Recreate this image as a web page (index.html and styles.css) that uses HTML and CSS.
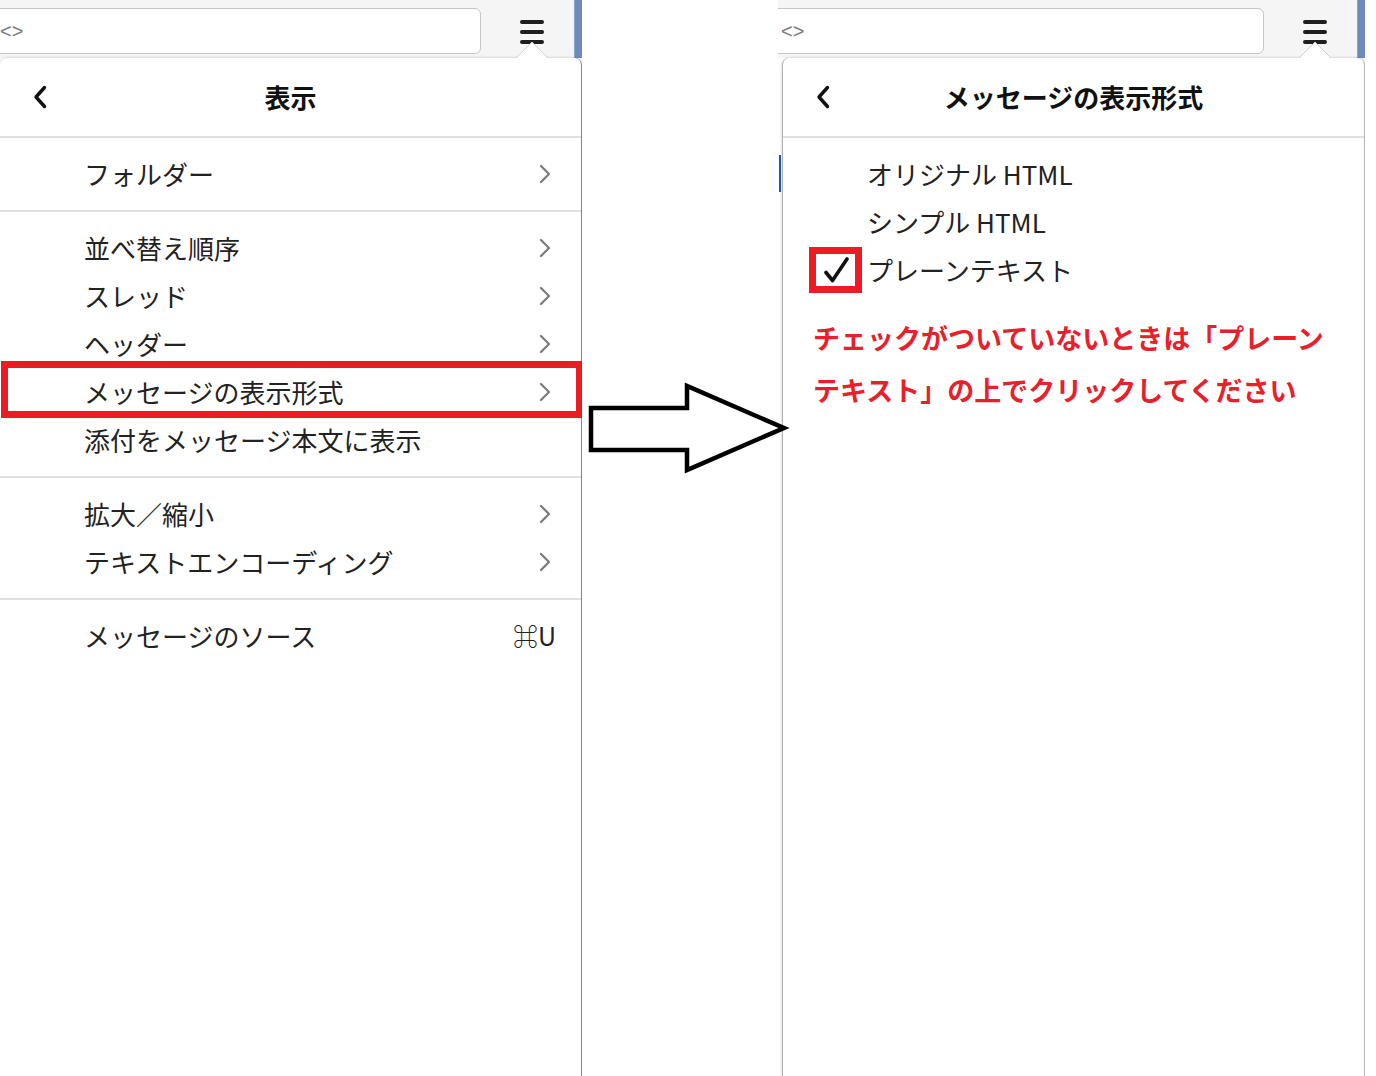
FILE: index.html
```html
<!DOCTYPE html>
<html lang="ja">
<head>
<meta charset="utf-8">
<title>表示 – メッセージの表示形式</title>
<link rel="stylesheet" href="styles.css">
</head>
<body>
<div class="page">
  <section class="shot shot-left">
    <div class="toolbar">
      <div class="search"><span class="search-hint">&lt;&gt;</span></div>
      <div class="menu-btn">
        <svg width="24" height="24" viewBox="0 0 24 24"><path d="M2 2H22M2 12H22M2 22H22" stroke="#1e1e1e" stroke-width="4" stroke-linecap="round" fill="none"/></svg>
      </div>
      <div class="edge"></div>
    </div>
    <div class="stage">
      <div class="panel">
        <span class="notch"><svg width="34" height="19" viewBox="0 0 34 19"><path d="M0 18.5L17 1L34 18.5Z" fill="#fff"/><path d="M0 18L17 1L34 18" fill="none" stroke="#cfcfcf" stroke-width="1"/><rect x="0" y="17" width="34" height="2" fill="#fff"/></svg></span>
        <header class="panel-head">
          <span class="back"><svg width="14" height="24" viewBox="0 0 14 24"><path d="M11.5 2.5L3 12L11.5 21.5" fill="none" stroke="#111" stroke-width="3.4" stroke-linecap="round" stroke-linejoin="round"/></svg></span>
          <h1 class="title">表示</h1>
          <span></span>
        </header>
        <div class="sep"></div>
        <ul class="group">
          <li class="item"><span>フォルダー</span><svg class="chev" width="12" height="20" viewBox="0 0 12 20"><path d="M2 2L10 10L2 18" fill="none" stroke="#7a7a7a" stroke-width="2.2" stroke-linecap="round" stroke-linejoin="round"/></svg></li>
        </ul>
        <div class="sep"></div>
        <ul class="group">
          <li class="item"><span>並べ替え順序</span><svg class="chev" width="12" height="20" viewBox="0 0 12 20"><path d="M2 2L10 10L2 18" fill="none" stroke="#7a7a7a" stroke-width="2.2" stroke-linecap="round" stroke-linejoin="round"/></svg></li>
          <li class="item"><span>スレッド</span><svg class="chev" width="12" height="20" viewBox="0 0 12 20"><path d="M2 2L10 10L2 18" fill="none" stroke="#7a7a7a" stroke-width="2.2" stroke-linecap="round" stroke-linejoin="round"/></svg></li>
          <li class="item"><span>ヘッダー</span><svg class="chev" width="12" height="20" viewBox="0 0 12 20"><path d="M2 2L10 10L2 18" fill="none" stroke="#7a7a7a" stroke-width="2.2" stroke-linecap="round" stroke-linejoin="round"/></svg></li>
          <li class="item"><span>メッセージの表示形式</span><svg class="chev" width="12" height="20" viewBox="0 0 12 20"><path d="M2 2L10 10L2 18" fill="none" stroke="#7a7a7a" stroke-width="2.2" stroke-linecap="round" stroke-linejoin="round"/></svg><span class="hl"></span></li>
          <li class="item"><span>添付をメッセージ本文に表示</span></li>
        </ul>
        <div class="sep"></div>
        <ul class="group">
          <li class="item"><span>拡大／縮小</span><svg class="chev" width="12" height="20" viewBox="0 0 12 20"><path d="M2 2L10 10L2 18" fill="none" stroke="#7a7a7a" stroke-width="2.2" stroke-linecap="round" stroke-linejoin="round"/></svg></li>
          <li class="item"><span>テキストエンコーディング</span><svg class="chev" width="12" height="20" viewBox="0 0 12 20"><path d="M2 2L10 10L2 18" fill="none" stroke="#7a7a7a" stroke-width="2.2" stroke-linecap="round" stroke-linejoin="round"/></svg></li>
        </ul>
        <div class="sep"></div>
        <ul class="group">
          <li class="item"><span>メッセージのソース</span><span class="shortcut">⌘U</span></li>
        </ul>
      </div>
    </div>
  </section>

  <div class="gutter"></div>

  <section class="shot shot-right">
    <div class="toolbar">
      <div class="search search-right"><span class="search-hint">&lt;&gt;</span></div>
      <div class="menu-btn">
        <svg width="24" height="24" viewBox="0 0 24 24"><path d="M2 2H22M2 12H22M2 22H22" stroke="#1e1e1e" stroke-width="4" stroke-linecap="round" fill="none"/></svg>
      </div>
      <div class="edge"></div>
    </div>
    <div class="stage">
      <div class="peek"><span class="peek-mark"></span></div>
      <div class="panel panel-right">
        <span class="notch"><svg width="34" height="19" viewBox="0 0 34 19"><path d="M0 18.5L17 1L34 18.5Z" fill="#fff"/><path d="M0 18L17 1L34 18" fill="none" stroke="#cfcfcf" stroke-width="1"/><rect x="0" y="17" width="34" height="2" fill="#fff"/></svg></span>
        <header class="panel-head">
          <span class="back"><svg width="14" height="24" viewBox="0 0 14 24"><path d="M11.5 2.5L3 12L11.5 21.5" fill="none" stroke="#111" stroke-width="3.4" stroke-linecap="round" stroke-linejoin="round"/></svg></span>
          <h1 class="title">メッセージの表示形式</h1>
          <span></span>
        </header>
        <div class="sep"></div>
        <ul class="group options">
          <li class="item"><span>オリジナル HTML</span></li>
          <li class="item"><span>シンプル HTML</span></li>
          <li class="item"><span class="check-box"><svg width="26" height="26" viewBox="0 0 26 26"><path d="M3 15.5L9.5 23.5L24 2" fill="none" stroke="#111" stroke-width="3.6" stroke-linecap="round" stroke-linejoin="round"/></svg></span><span>プレーンテキスト</span></li>
        </ul>
        <p class="note">チェックがついていないときは「プレーン<br>テキスト」の上でクリックしてください</p>
      </div>
    </div>
  </section>

  <svg class="arrow" width="206" height="96" viewBox="585 380 206 96">
    <path d="M591 408H687V386L784 428L687 470V450H591Z" fill="#fff" stroke="#000" stroke-width="4.5" stroke-linejoin="miter"/>
  </svg>
</div>
</body>
</html>
```

FILE: styles.css
```css
* {
  box-sizing: border-box;
}

body {
  margin: 0;
  background: #fff;
  font-family: "Noto Sans CJK JP", "Noto Sans", "DejaVu Sans", sans-serif;
  color: #222;
}

.page {
  position: relative;
  display: flex;
  width: 1376px;
  height: 1076px;
  overflow: hidden;
}

.shot {
  display: flex;
  flex-direction: column;
  height: 1076px;
  overflow: hidden;
  flex: none;
}

.shot-left {
  width: 582px;
}

.gutter {
  width: 196px;
  flex: none;
}

.shot-right {
  width: 587px;
}

/* toolbar strip */
.toolbar {
  flex: none;
  display: flex;
  height: 58px;
  background: #f5f5f5;
}

.search {
  flex: 1;
  display: flex;
  align-items: center;
  height: 46px;
  margin: 8px 0 0 -12px;
  padding-left: 11px;
  background: #fff;
  border: 1.5px solid #c6c6c6;
  border-radius: 6px;
}

.search-right {
  margin-left: -8px;
  padding-left: 10px;
}

.search-hint {
  font-family: "Liberation Sans", sans-serif;
  font-size: 20px;
  line-height: 1;
  color: #7c7c7c;
}

.menu-btn {
  width: 93px;
  flex: none;
  padding: 20px 0 0 39px;
}

.menu-btn svg {
  display: block;
}

.edge {
  width: 8px;
  flex: none;
  background: #6d8aba;
  border-left: 1px solid #8ea6cc;
}

/* popup panel */
.stage {
  flex: 1;
  display: flex;
}

.peek {
  width: 4px;
  flex: none;
}

.peek-mark {
  display: block;
  width: 2px;
  height: 37px;
  margin: 97px 0 0 1px;
  background: #1c5bb5;
}

.panel {
  position: relative;
  flex: none;
  width: 582px;
  background: #fff;
  border-right: 1px solid #8a8580;
  border-radius: 7px 7px 0 0;
  box-shadow: 0 0 3px rgba(0, 0, 0, 0.22);
}

.panel-right {
  width: 583px;
  border-left: 1px solid #b0b0b0;
  border-right-color: #b4b4b4;
}

.notch {
  position: absolute;
  left: 515px;
  top: -17px;
  width: 34px;
  height: 19px;
}

.notch svg {
  display: block;
}

.panel-head {
  display: grid;
  grid-template-columns: 1fr auto 1fr;
  align-items: center;
  height: 78px;
}

.back {
  padding-left: 33px;
  display: flex;
  align-items: center;
}

.title {
  margin: 0;
  font-size: 26px;
  font-weight: 700;
  color: #111;
  line-height: 1;
}

.sep {
  height: 2px;
  background: #e0e0e0;
}

.group {
  list-style: none;
  margin: 0;
  padding: 12px 0;
}

.item {
  position: relative;
  display: flex;
  align-items: center;
  justify-content: space-between;
  height: 48px;
  padding: 0 30px 1px 84px;
  font-size: 26px;
  line-height: 1;
  white-space: nowrap;
}

.chev {
  flex: none;
  display: block;
}

.shortcut {
  margin-right: -5px;
  font-size: 25px;
}

.hl {
  position: absolute;
  left: 1px;
  top: -7px;
  right: -2px;
  bottom: -2px;
  border: 7px solid #ec1c24;
}

.options {
  padding-bottom: 0;
}

.options .item {
  justify-content: flex-start;
}

.check-box {
  position: absolute;
  left: 26px;
  top: 1px;
  width: 53px;
  height: 46px;
  border: 7px solid #ec1c24;
  display: flex;
  align-items: center;
  justify-content: center;
}

.check-box svg {
  display: block;
}

.note {
  margin: 18px 0 0 30px;
  color: #e8202a;
  font-size: 27px;
  font-weight: 700;
  line-height: 52px;
  white-space: nowrap;
}

.arrow {
  position: absolute;
  left: 585px;
  top: 380px;
}
```
